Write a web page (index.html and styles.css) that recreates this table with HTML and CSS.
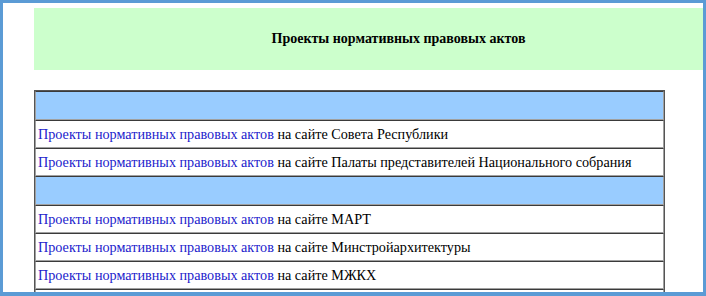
FILE: index.html
```html
<!DOCTYPE html>
<html lang="ru">
<head>
<meta charset="utf-8">
<title>Проекты нормативных правовых актов</title>
<link rel="stylesheet" href="styles.css">
</head>
<body>
<div class="frame">
  <div class="page">
    <div class="banner">Проекты нормативных правовых актов</div>
    <table class="acts">
      <tr class="group"><td></td></tr>
      <tr><td><a href="#">Проекты нормативных правовых актов</a> на сайте Совета Республики</td></tr>
      <tr><td><a href="#">Проекты нормативных правовых актов</a> на сайте Палаты представителей Национального собрания</td></tr>
      <tr class="group"><td></td></tr>
      <tr><td><a href="#">Проекты нормативных правовых актов</a> на сайте МАРТ</td></tr>
      <tr><td><a href="#">Проекты нормативных правовых актов</a> на сайте Минстройархитектуры</td></tr>
      <tr><td><a href="#">Проекты нормативных правовых актов</a> на сайте МЖКХ</td></tr>
      <tr><td></td></tr>
    </table>
  </div>
</div>
</body>
</html>
```

FILE: styles.css
```css
html, body {
  margin: 0;
  padding: 0;
  background: #ffffff;
}

.frame {
  width: 706px;
  height: 296px;
  box-sizing: border-box;
  border: 3px solid #5b9bd5;
  border-bottom-width: 4px;
  overflow: hidden;
  background: #ffffff;
}

.page {
  padding: 5px 0 0 31px;
  font-family: "Liberation Serif", "Times New Roman", serif;
  font-size: 14.2px;
  color: #000000;
}

.banner {
  height: 62px;
  background: #ccffcc;
  display: flex;
  align-items: center;
  justify-content: center;
  padding-left: 60px;
  font-weight: bold;
  font-size: 14px;
}

.acts {
  margin-top: 20px;
  width: 631px;
  border-collapse: separate;
  border-spacing: 0;
  border-left: 1px solid #555555;
  border-right: 1px solid #555555;
  border-top: 1px solid #555555;
}

.acts td {
  height: 26px;
  padding: 0 2px;
  border-top: 1px solid #3a3a3a;
  border-bottom: 1px solid #a0a0a0;
  border-left: 1px solid #a0a0a0;
  border-right: 1px solid #a0a0a0;
  vertical-align: middle;
  white-space: nowrap;
}

.acts .group td {
  height: 27px;
  background: #99ccff;
}

.acts a {
  color: #2222cc;
  text-decoration: none;
}
```
